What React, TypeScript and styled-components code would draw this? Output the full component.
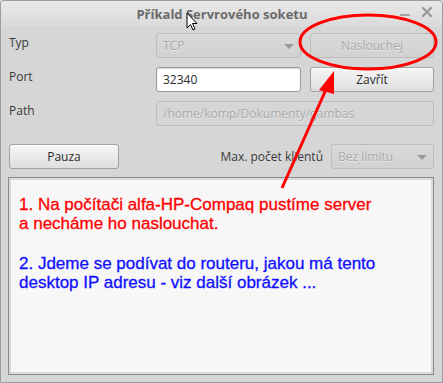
import React from "react";
import styled, { createGlobalStyle } from "styled-components";

const GlobalStyle = createGlobalStyle`
  html, body {
    margin: 0;
    padding: 0;
    background: #d6d6d6;
  }
  body {
    font-family: "Open Sans", "DejaVu Sans", sans-serif;
    font-size: 12px;
    color: #3a3a3a;
  }
`;

const Window = styled.div`
  position: relative;
  box-sizing: border-box;
  width: 443px;
  height: 383px;
  background: #d6d6d6;
  border: 1px solid #9c9c9c;
  border-radius: 4px 4px 0 0;
  overflow: hidden;
  display: flex;
  flex-direction: column;
`;

const TitleBar = styled.div`
  height: 25px;
  flex: none;
  display: flex;
  align-items: center;
  justify-content: center;
  position: relative;
  background: linear-gradient(#e9e9e9, #dadada);
`;

const Title = styled.div`
  font-family: "Open Sans", "DejaVu Sans", sans-serif;
  font-weight: 700;
  font-size: 13px;
  color: #6b6b6b;
  margin-left: 1px;
`;

const TitleButtons = styled.div`
  position: absolute;
  right: 9px;
  top: 5px;
  display: flex;
  gap: 10px;
  align-items: center;
`;

const Content = styled.div`
  flex: 1;
  display: flex;
  flex-direction: column;
  padding: 7px 8px 7px 7px;
  gap: 9px;
`;

const Row = styled.div`
  display: grid;
  grid-template-columns: 148px 145px 1fr;
  height: 25px;
  align-items: stretch;
`;

const Label = styled.div`
  display: flex;
  align-items: center;
  padding-left: 1px;
  padding-bottom: 7px;
  color: #3a3a3a;
`;

const Button = styled.button<{ $disabled?: boolean }>`
  box-sizing: border-box;
  font-family: "Open Sans", "DejaVu Sans", sans-serif;
  font-size: 12px;
  border-radius: 3px;
  padding: 0;
  color: ${(p) => (p.$disabled ? "#a9a9a9" : "#2b2b2b")};
  text-shadow: ${(p) => (p.$disabled ? "0 1px 0 #ececec" : "none")};
  border: 1px solid ${(p) => (p.$disabled ? "#bcbcbc" : "#a2a2a2")};
  background: ${(p) =>
    p.$disabled
      ? "linear-gradient(#dadada, #d2d2d2)"
      : "linear-gradient(#f6f6f6, #dedede)"};
  box-shadow: ${(p) => (p.$disabled ? "none" : "inset 0 1px 0 #ffffff")};
`;

const SideButton = styled(Button)`
  margin-left: 9px;
`;

const Field = styled.div<{ $disabled?: boolean; $span?: boolean }>`
  box-sizing: border-box;
  grid-column: ${(p) => (p.$span ? "2 / 4" : "auto")};
  display: flex;
  align-items: center;
  padding-left: 6px;
  border-radius: 3px;
  border: 1px solid ${(p) => (p.$disabled ? "#bdbdbd" : "#9a9a9a")};
  background: ${(p) => (p.$disabled ? "#d6d6d6" : "#ffffff")};
  color: ${(p) => (p.$disabled ? "#a9a9a9" : "#2b2b2b")};
  text-shadow: ${(p) => (p.$disabled ? "0 1px 0 #ececec" : "none")};
  box-shadow: ${(p) => (p.$disabled ? "none" : "inset 0 1px 1px #d8d8d8")};
`;

const Combo = styled(Field)`
  justify-content: space-between;
  padding-right: 6px;
  background: linear-gradient(#d9d9d9, #d1d1d1);
`;

const Caret = styled.span`
  width: 0;
  height: 0;
  border-left: 5px solid transparent;
  border-right: 5px solid transparent;
  border-top: 5px solid #9a9a9a;
  margin-top: 1px;
`;

const ControlRow = styled.div`
  display: flex;
  height: 25px;
  margin-top: 9px;
  padding-left: 1px;
`;

const PauseButton = styled(Button)`
  width: 110px;
`;

const Spacer = styled.div`
  flex: 1;
`;

const ClientsLabel = styled.div`
  display: flex;
  align-items: center;
  margin-right: 8px;
  color: #3a3a3a;
`;

const ClientsCombo = styled(Combo)`
  width: 103px;
`;

const TextFrame = styled.div`
  box-sizing: border-box;
  height: 198px;
  margin-top: -1px;
  border: 1px solid #8c8c8c;
  padding: 2px;
  background: #d9d9d9;
`;

const TextArea = styled.div`
  box-sizing: border-box;
  height: 100%;
  background: #f7f7f7;
  padding: 15px 0 0 8px;
  font-family: "Liberation Sans", Arial, sans-serif;
  font-size: 17px;
  line-height: 19px;
`;

const Line = styled.div<{ $color: string; $gap?: number }>`
  color: ${(p) => p.$color};
  margin-top: ${(p) => p.$gap ?? 0}px;
  -webkit-text-stroke: 0.3px ${(p) => p.$color};
`;

const Overlay = styled.svg`
  position: absolute;
  left: 0;
  top: 0;
  pointer-events: none;
`;

export default function App() {
  return (
    <>
      <GlobalStyle />
      <Window>
        <TitleBar>
          <Title>Příkald Servrového soketu</Title>
          <TitleButtons>
            <svg width="12" height="12" viewBox="0 0 12 12">
              <rect x="1" y="8" width="10" height="2" fill="#a5a5a5" />
            </svg>
            <svg width="12" height="12" viewBox="0 0 12 12">
              <path
                d="M2 2 L10 10 M10 2 L2 10"
                stroke="#9a9a9a"
                strokeWidth="2.4"
                strokeLinecap="round"
              />
            </svg>
          </TitleButtons>
        </TitleBar>
        <Content>
          <Row>
            <Label>Typ</Label>
            <Combo $disabled>
              TCP
              <Caret />
            </Combo>
            <SideButton $disabled>Naslouchej</SideButton>
          </Row>
          <Row>
            <Label>Port</Label>
            <Field>32340</Field>
            <SideButton>Zavřít</SideButton>
          </Row>
          <Row>
            <Label>Path</Label>
            <Field $disabled $span>
              /home/komp/Dokumenty/gambas
            </Field>
          </Row>
          <ControlRow>
            <PauseButton>Pauza</PauseButton>
            <Spacer />
            <ClientsLabel>Max. počet klientů</ClientsLabel>
            <ClientsCombo $disabled>
              Bez limitu
              <Caret />
            </ClientsCombo>
          </ControlRow>
          <TextFrame>
            <TextArea>
              <Line $color="#ff0000">1. Na počítači alfa-HP-Compaq pustíme server</Line>
              <Line $color="#ff0000">a necháme ho naslouchat.</Line>
              <Line $color="#1010ff" $gap={21}>
                2. Jdeme se podívat do routeru, jakou má tento
              </Line>
              <Line $color="#1010ff">desktop IP adresu - viz další obrázek ...</Line>
            </TextArea>
          </TextFrame>
        </Content>
        <Overlay width="443" height="383" viewBox="0 0 443 383">
          <ellipse
            cx="367"
            cy="41"
            rx="68"
            ry="27"
            fill="none"
            stroke="#ff0000"
            strokeWidth="3"
          />
          <line
            x1="281"
            y1="187"
            x2="327"
            y2="84"
            stroke="#ff0000"
            strokeWidth="3"
          />
          <polygon points="333,70 318,89 333,93" fill="#ff0000" />
          <path
            d="M186 12 L186 27 L189.5 23.5 L192 29 L194 28 L191.5 22.5 L196 22.5 Z"
            fill="#ffffff"
            stroke="#000000"
            strokeWidth="1"
            strokeLinejoin="round"
          />
        </Overlay>
      </Window>
    </>
  );
}
